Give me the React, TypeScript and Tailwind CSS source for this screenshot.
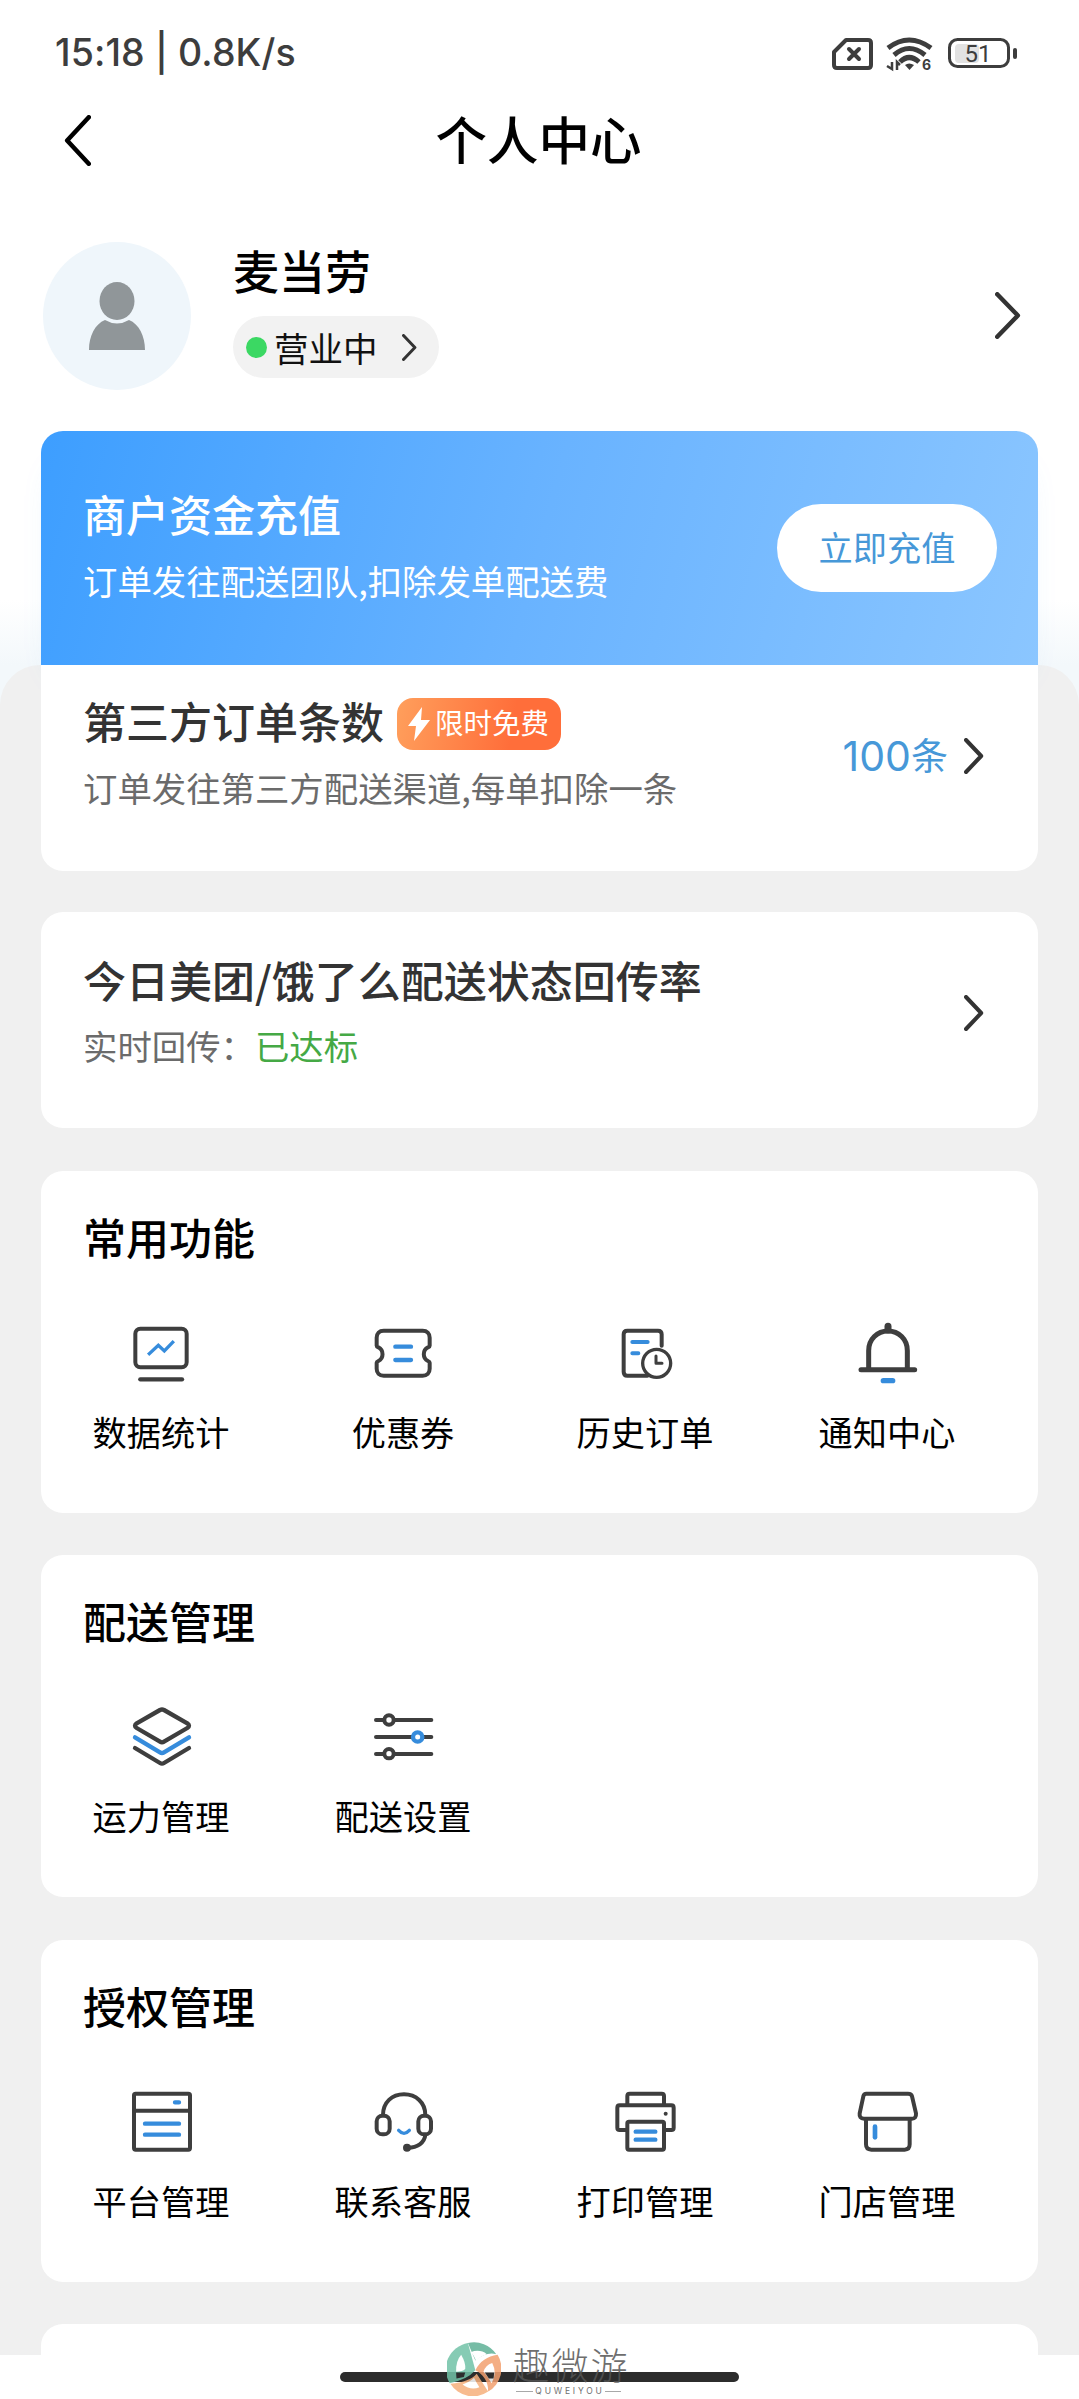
import type { ReactNode } from "react";

const INK = "#3e3e3e";
const BLUE = "#368cdc";

function Chevron({ w, h, stroke, color, flip = false }: { w: number; h: number; stroke: number; color: string; flip?: boolean }) {
  const p = stroke / 2;
  const d = flip
    ? `M${w - p} ${p}L${p * 1.4} ${h / 2}L${w - p} ${h - p}`
    : `M${p} ${p}L${w - p * 1.4} ${h / 2}L${p} ${h - p}`;
  return (
    <svg className="shrink-0" width={w} height={h} viewBox={`0 0 ${w} ${h}`} fill="none">
      <path d={d} stroke={color} strokeWidth={stroke} strokeLinecap="round" strokeLinejoin="round" />
    </svg>
  );
}

function Glyph({ x, y, stroke = 12, children }: { x: number; y: number; stroke?: number; children: ReactNode }) {
  return (
    <svg
      width="66"
      height="66"
      viewBox={`${x} ${y} 198 198`}
      fill="none"
      stroke={INK}
      strokeWidth={stroke}
      strokeLinecap="round"
      strokeLinejoin="round"
    >
      {children}
    </svg>
  );
}

const StatsIcon = () => (
  <Glyph x={204} y={88}>
    <rect x="226" y="114" width="154" height="116" rx="15" />
    <path d="M241 266H366" strokeWidth="13" />
    <path d="M268 189L295 164L313 181L338 155" stroke={BLUE} strokeLinecap="square" strokeLinejoin="miter" strokeWidth="10" />
  </Glyph>
);

const CouponIcon = () => (
  <Glyph x={932} y={88}>
    <path d="M973 120H1090C1103 120 1111 128 1111 141V165Q1111 168 1106 170A23 23 0 0 0 1106 211Q1111 213 1111 216V234C1111 247 1103 255 1090 255H973C960 255 952 247 952 234V216Q952 213 957 211A23 23 0 0 0 957 170Q952 168 952 165V141C952 128 960 120 973 120Z" />
    <path d="M1008 168H1055M1008 208H1055" stroke={BLUE} strokeWidth="13" />
  </Glyph>
);

const HistoryIcon = () => (
  <Glyph x={219} y={88}>
    <path d="M368 165V131Q368 120 357 120H265Q254 120 254 131V243Q254 255 265 255H325" />
    <path d="M280 154H326M280 188H298" stroke={BLUE} strokeWidth="12" />
    <circle cx="353" cy="218" r="42" fill="#fff" strokeWidth="10" />
    <path d="M351 196V218H369" strokeWidth="9" />
  </Glyph>
);

const BellIcon = () => (
  <Glyph x={945} y={88}>
    <path d="M989 232V180C989 146 1015 121 1047 121S1105 146 1105 180V232" strokeWidth="15" />
    <path d="M1047 118V107" strokeWidth="21" />
    <path d="M966 237H1127" strokeWidth="15" />
    <path d="M1033 270H1061" stroke={BLUE} strokeWidth="16" />
  </Glyph>
);

const LayersIcon = () => (
  <Glyph x={204} y={73} stroke={13}>
    <path d="M300 91Q306 88 312 91L382 131Q392 138 382 145L312 186Q306 190 300 186L230 145Q220 138 230 131Z" />
    <path d="M225 173L300 218Q306 222 312 218L387 173" stroke={BLUE} />
    <path d="M225 205L300 250Q306 254 312 250L387 205" />
  </Glyph>
);

const SlidersIcon = () => (
  <Glyph x={932} y={73}>
    <path d="M950 121H1116M950 172H1116M950 223H1116" />
    <circle cx="989" cy="121" r="14" fill="#fff" />
    <circle cx="1075" cy="172" r="14" fill="#fff" stroke={BLUE} strokeWidth="13" />
    <circle cx="989" cy="222" r="14" fill="#fff" />
  </Glyph>
);

const PlatformIcon = () => (
  <Glyph x={204} y={88}>
    <rect x="222" y="102" width="168" height="168" rx="5" />
    <path d="M222 153H390" />
    <path d="M345 128H357M255 192H357M255 225H357" stroke={BLUE} strokeWidth="13" />
  </Glyph>
);

const HeadsetIcon = () => (
  <Glyph x={932} y={88}>
    <path d="M971 166C971 128 998 104 1034 104S1098 128 1098 166" />
    <rect x="952" y="168" width="39" height="56" rx="17" />
    <rect x="1077" y="168" width="38" height="56" rx="17" />
    <path d="M1098 226C1095 250 1074 264 1046 264" />
    <circle cx="1043" cy="264" r="8" fill={INK} strokeWidth="8" />
    <path d="M1018 212Q1034 230 1050 212" stroke={BLUE} strokeWidth="10" />
  </Glyph>
);

const PrinterIcon = () => (
  <Glyph x={219} y={88}>
    <path d="M265 136V109Q265 102 272 102H368Q375 102 375 109V136" />
    <path d="M262 211H242Q235 211 235 204V144Q235 137 242 137H397Q404 137 404 144V204Q404 211 397 211H378" />
    <rect x="265" y="186" width="110" height="84" rx="5" />
    <circle cx="380" cy="162" r="6" fill={INK} stroke="none" />
    <path d="M290 216H349M290 240H349" stroke={BLUE} strokeWidth="13" />
  </Glyph>
);

const StoreIcon = () => (
  <Glyph x={945} y={88}>
    <path d="M982 102H1107Q1117 102 1119 110L1131 161Q1132 177 1119 177H975Q960 177 962 161L973 110Q975 102 982 102Z" />
    <path d="M981 180V254Q981 270 997 270H1097Q1112 270 1112 254V180" />
    <path d="M1008 201V233" stroke={BLUE} strokeWidth="14" />
  </Glyph>
);

type Entry = { label: string; icon: ReactNode };

function FeatureCard({ title, items }: { title: string; items: Entry[] }) {
  return (
    <section className="h-[342px] rounded-[22px] bg-white pt-[35px]">
      <h2 className="pl-[42px] text-[43px] leading-[60px] font-medium text-black">{title}</h2>
      <div className="-ml-px mt-[54px] grid w-[968px] grid-cols-4">
        {items.map((item) => (
          <div key={item.label} className="flex flex-col items-center">
            {item.icon}
            <span className="mt-[20px] text-[34.2px] leading-[50px] text-black">{item.label}</span>
          </div>
        ))}
      </div>
    </section>
  );
}

function StatusBar() {
  return (
    <div className="flex h-[106px] items-center justify-between pr-[62px] pl-[55px] text-[#3d3d3d]">
      <span className="font-[Inter] text-[37.5px] leading-none font-medium tracking-[0.1px]">15:18 | 0.8K/s</span>
      <svg className="-mt-px" width="186" height="48" viewBox="0 -4 186 48" fill="none" stroke="#3d3d3d">
        <path d="M15 7H37Q40 7 40 10V32Q40 35 37 35H6Q3 35 3 32V19Z" strokeWidth="4" strokeLinejoin="round" />
        <path d="M18 16L28 26M28 16L18 26" strokeWidth="4" strokeLinecap="round" />
        <path d="M57 15Q78 -1 100 15" strokeWidth="5" />
        <path d="M63 22Q78 9 94 22" strokeWidth="5" />
        <path d="M69 29Q78 20 88 29" strokeWidth="5" />
        <path d="M74 32Q78 29 83 32L78.500 37Z" fill="#3d3d3d" stroke="none" />
        <path d="M61 29V36L56 33M66 37V29L69 32" strokeWidth="2.500" />
        <text x="91" y="37" fontFamily="Inter" fontWeight="700" fontSize="14" fill="#3d3d3d" stroke="none">6</text>
        <rect x="124" y="11" width="24" height="19" rx="4" fill="#e2e2e2" stroke="none" />
        <rect x="118.500" y="6.500" width="59" height="27" rx="8" strokeWidth="3" />
        <path d="M184 17V24" strokeWidth="4" strokeLinecap="round" />
        <text x="147" y="29" textAnchor="middle" fontFamily="Roboto" fontSize="24" fill="#3d3d3d" stroke="none">51</text>
      </svg>
    </div>
  );
}

function Watermark() {
  return (
    <div className="absolute top-[7px] left-[447px] flex text-[#555] opacity-85">
      <svg width="54" height="54" viewBox="0 0 160 160">
        <path d="M8 122A79 79 0 0 1 62 3L84 84Q60 112 8 122Z" fill="#72c3a8" />
        <path d="M62 3A79 79 0 0 1 146 36Q116 28 84 55Z" fill="#5fb196" />
        <path d="M150 38A79 79 0 0 1 122 147Q122 104 84 84Q104 44 150 38Z" fill="#f3a06f" />
        <path d="M10 124A79 79 0 0 0 122 147L88 94Q68 118 10 124Z" fill="#f6b07c" />
        <path d="M27 88Q26 56 42 38Q56 62 54 80Q46 88 27 88Z" fill="#fff" />
        <path d="M70 30Q98 20 118 36Q98 42 86 58Q82 40 70 30Z" fill="#fff" />
        <path d="M134 62Q150 92 132 122Q118 98 108 88Q114 68 134 62Z" fill="#fff" />
        <path d="M46 126Q68 118 80 106Q88 122 96 134Q70 144 46 126Z" fill="#fff" />
        <path d="M27 90H54L50 104L28 108Z" fill="#2c2c2c" />
        <path d="M112 90H140L138 108H124Z" fill="#2c2c2c" />
      </svg>
      <div className="flex w-[120px] flex-col items-center pl-[12px]">
        <span className="ml-[8px] text-[37px] leading-[44px] font-light tracking-[2px] whitespace-nowrap">趣微游</span>
        <div className="ml-[3px] flex items-center text-[8.500px] leading-[10px]">
          <i className="h-px w-[17px] bg-[#999]" />
          <span className="pl-[2px] font-[Inter] tracking-[2.800px]">QUWEIYOU</span>
          <i className="h-px w-[16px] bg-[#999]" />
        </div>
      </div>
    </div>
  );
}

export default function App() {
  return (
    <div className="flex h-[2399px] w-[1079px] flex-col overflow-hidden bg-white bg-[linear-gradient(#fff_600px,#f3f8fb_665px,#f3f8fb_710px,#fff_711px)] font-['Noto_Sans_CJK_SC',sans-serif]">
      <StatusBar />

      <header className="grid h-[68px] grid-cols-[1fr_auto_1fr] items-center pl-[64px]">
        <Chevron w={27} h={51} stroke={4.5} color="#000" flip />
        <h1 className="-mt-[5px] -ml-[66px] text-[51.500px] leading-[68px] font-medium text-black">个人中心</h1>
      </header>

      <section className="mt-[68px] flex h-[148px] shrink-0 items-start pr-[58px] pl-[43px]">
        <div className="flex size-[148px] items-center justify-center rounded-full bg-[#eff6fb]">
          <svg width="56" height="68" viewBox="0 0 56 68" fill="#909699">
            <ellipse cx="28" cy="19" rx="17.500" ry="19" />
            <path d="M0 68C0 54 6 42 16 38Q28 45 40 38C50 42 56 54 56 68Z" />
          </svg>
        </div>
        <div className="-mt-[3px] ml-[42px] flex flex-1 flex-col items-start">
          <div className="text-[46px] leading-[60px] font-medium text-black">麦当劳</div>
          <div className="mt-[17px] flex h-[62px] w-[206px] items-center rounded-full bg-[#f2f2f2] pl-[13px]">
            <i className="size-[21px] rounded-full bg-[#3bd863]" />
            <span className="mr-[24px] ml-[7px] text-[34.500px] leading-[50px] text-[#111]">营业中</span>
            <Chevron w={15} h={27} stroke={3} color="#333" />
          </div>
        </div>
        <div className="mt-[50px]">
          <Chevron w={26} h={47} stroke={4.5} color="#333" />
        </div>
      </section>

      <main className="mt-[275px] h-[1690px] shrink-0 overflow-visible rounded-t-[40px] bg-[#f0f0f0] px-[41px]">
        <div className="-mt-[234px] flex flex-col gap-[42.500px]">
          <section className="-mb-[1.500px] h-[440px]">
            <div className="flex h-[234px] items-start justify-between rounded-t-[22px] bg-[linear-gradient(105deg,#3d9eff_0%,#69b3ff_50%,#8bc6ff_100%)] pr-[41px] pl-[42px] shadow-[0_24px_36px_-20px_rgba(70,160,235,0.22)]">
              <div className="pt-[52px] text-white">
                <div className="text-[43px] leading-[60px] font-medium">商户资金充值</div>
                <div className="mt-[12px] text-[34.400px] leading-[50px]">订单发往配送团队,扣除发单配送费</div>
              </div>
              <button className="mt-[73px] h-[88px] w-[220px] rounded-full bg-white pb-[3px] text-[34.200px] text-[#4798d8]">立即充值</button>
            </div>
            <div className="relative flex h-[206px] items-start justify-between rounded-b-[22px] bg-white pr-[54px] pl-[42px]">
              <div className="pt-[25px]">
                <div className="flex items-center text-[43px] leading-[60px] font-medium text-[#333]">
                  第三方订单条数
                  <span className="mt-[7px] ml-[13px] flex h-[52px] w-[164px] items-center rounded-[16px] bg-[linear-gradient(100deg,#ff9f5c,#ff6e3a_70%)] pl-[11px] text-[28.500px] leading-[40px] font-normal text-white">
                    <svg className="mr-[5px]" width="22" height="34" viewBox="0 0 22 34" fill="#fff">
                      <path d="M14 0L0 19H8L6 34L22 13H13Z" />
                    </svg>
                    <span className="-translate-y-[2px]">限时免费</span>
                  </span>
                </div>
                <div className="mt-[12px] text-[34.400px] leading-[50px] text-[#6b6b6b]">订单发往第三方配送渠道,每单扣除一条</div>
              </div>
              <div className="mt-[61px] flex h-[60px] items-center text-[#4798d8]">
                <span className="font-[Inter] text-[41px] leading-none">100</span>
                <span className="mr-[16px] -translate-y-[2px] text-[37px] leading-[60px]">条</span>
                <Chevron w={20} h={36} stroke={4} color="#333" />
              </div>
            </div>
          </section>

          <section className="flex h-[216px] items-start justify-between rounded-[22px] bg-white pr-[54px] pl-[42px]">
            <div className="pt-[37px]">
              <div className="text-[43px] leading-[60px] font-medium text-[#333]">今日美团/饿了么配送状态回传率</div>
              <div className="mt-[11px] flex text-[34.400px] leading-[50px] text-[#6b6b6b]">
                实时回传：<span className="text-[#45a945]">已达标</span>
              </div>
            </div>
            <div className="mt-[83px]">
              <Chevron w={20} h={36} stroke={4} color="#333" />
            </div>
          </section>

          <FeatureCard
            title="常用功能"
            items={[
              { label: "数据统计", icon: <StatsIcon /> },
              { label: "优惠券", icon: <CouponIcon /> },
              { label: "历史订单", icon: <HistoryIcon /> },
              { label: "通知中心", icon: <BellIcon /> },
            ]}
          />
          <FeatureCard
            title="配送管理"
            items={[
              { label: "运力管理", icon: <LayersIcon /> },
              { label: "配送设置", icon: <SlidersIcon /> },
            ]}
          />
          <FeatureCard
            title="授权管理"
            items={[
              { label: "平台管理", icon: <PlatformIcon /> },
              { label: "联系客服", icon: <HeadsetIcon /> },
              { label: "打印管理", icon: <PrinterIcon /> },
              { label: "门店管理", icon: <StoreIcon /> },
            ]}
          />
          <section className="h-[31px] rounded-t-[22px] bg-white" />
        </div>
      </main>

      <footer className="relative -mt-[20px] flex h-[64px] shrink-0 justify-center pt-[37px]">
        <div className="h-[10px] w-[399px] rounded-full bg-[#2c2c2c]" />
        <Watermark />
      </footer>
    </div>
  );
}
